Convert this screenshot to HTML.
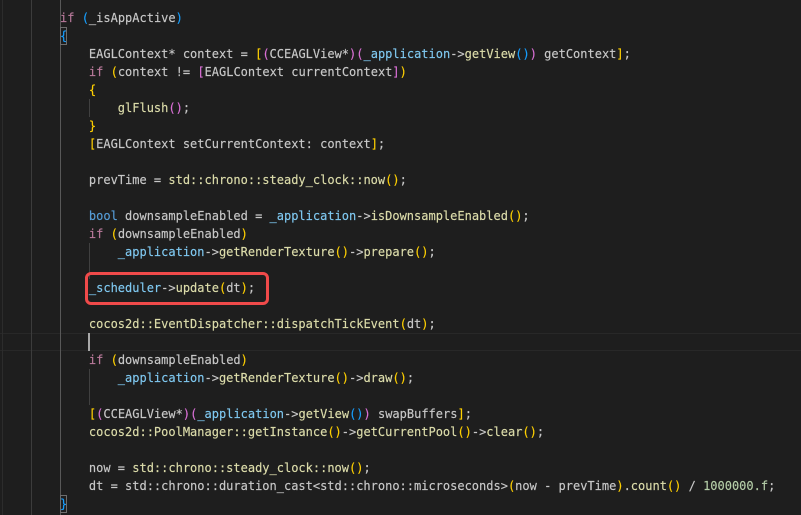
<!DOCTYPE html>
<html>
<head>
<meta charset="utf-8">
<style>
html,body{margin:0;padding:0;background:#1e1e1e;}
#e{position:relative;width:801px;height:515px;overflow:hidden;background:#1e1e1e;font-family:"DejaVu Sans Mono","Liberation Mono",monospace;font-size:12px;line-height:18px;color:#c8c8c8;}
#x{position:absolute;left:0;top:0;width:801px;height:515px;filter:blur(0.3px);-webkit-text-stroke:0.15px currentColor;}
.l{position:absolute;left:60px;white-space:pre;height:18px;}
.g{position:absolute;width:1px;background:#404040;}
.k{color:#c586c0}.c{color:#b8799a}.v{color:#7fc8f0}.f{color:#dcdcaa}.t{color:#569cd6}.n{color:#b5cea8}
.y{color:#ffd000}.p{color:#da70d6}.b{color:#179fff}
</style>
</head>
<body>
<div id="e">
<div style="position:absolute;left:0;top:333px;width:801px;height:18px;border-top:1px solid #282828;border-bottom:1px solid #282828;box-sizing:border-box"></div>
<div class="g" style="left:2px;top:0;height:515px;background:#2c2c2c"></div>
<div class="g" style="left:31px;top:0;height:515px;background:#3c3c3c"></div>
<div class="g" style="left:60px;top:0;height:515px;background:#585858"></div>
<div class="g" style="left:89px;top:99px;height:18px"></div>
<div class="g" style="left:89px;top:243px;height:36px"></div>
<div class="g" style="left:89px;top:369px;height:36px"></div>
<div style="position:absolute;left:60px;top:27px;width:5px;height:16px;border:1px solid #6e6e6e"></div>
<div style="position:absolute;left:60px;top:495px;width:5px;height:16px;border:1px solid #6e6e6e"></div>
<div style="position:absolute;left:88px;top:333px;width:2px;height:18px;background:#a8a8a8"></div>

<div id="x">
<div class="l" style="top:9px"><span class="c">if</span> <span class="b">(</span>_isAppActive<span class="b">)</span></div>
<div class="l" style="top:27px"><span class="b">{</span></div>
<div class="l" style="top:45px">    EAGLContext* context = <span class="y">[</span><span class="p">(</span>CCEAGLView*<span class="p">)</span><span class="p">(</span><span class="v">_application</span>-&gt;<span class="f">getView</span><span class="b">()</span><span class="p">)</span> getContext<span class="y">]</span>;</div>
<div class="l" style="top:63px">    <span class="c">if</span> <span class="y">(</span>context != <span class="p">[</span>EAGLContext currentContext<span class="p">]</span><span class="y">)</span></div>
<div class="l" style="top:81px">    <span class="y">{</span></div>
<div class="l" style="top:99px">        <span class="f">glFlush</span><span class="p">()</span>;</div>
<div class="l" style="top:117px">    <span class="y">}</span></div>
<div class="l" style="top:135px">    <span class="y">[</span>EAGLContext setCurrentContext: context<span class="y">]</span>;</div>
<div class="l" style="top:171px">    prevTime = <span class="f">std::chrono::steady_clock::now</span><span class="y">()</span>;</div>
<div class="l" style="top:207px">    <span class="t">bool</span> downsampleEnabled = <span class="v">_application</span>-&gt;<span class="f">isDownsampleEnabled</span><span class="y">()</span>;</div>
<div class="l" style="top:225px">    <span class="c">if</span> <span class="y">(</span>downsampleEnabled<span class="y">)</span></div>
<div class="l" style="top:243px">        <span class="v">_application</span>-&gt;<span class="f">getRenderTexture</span><span class="y">()</span>-&gt;<span class="f">prepare</span><span class="y">()</span>;</div>
<div class="l" style="top:279px">    <span class="v">_scheduler</span>-&gt;<span class="f">update</span><span class="y">(</span>dt<span class="y">)</span>;</div>
<div class="l" style="top:315px">    <span class="f">cocos2d::EventDispatcher::dispatchTickEvent</span><span class="y">(</span>dt<span class="y">)</span>;</div>
<div class="l" style="top:351px">    <span class="c">if</span> <span class="y">(</span>downsampleEnabled<span class="y">)</span></div>
<div class="l" style="top:369px">        <span class="v">_application</span>-&gt;<span class="f">getRenderTexture</span><span class="y">()</span>-&gt;<span class="f">draw</span><span class="y">()</span>;</div>
<div class="l" style="top:405px">    <span class="y">[</span><span class="p">(</span>CCEAGLView*<span class="p">)</span><span class="p">(</span><span class="v">_application</span>-&gt;<span class="f">getView</span><span class="b">()</span><span class="p">)</span> swapBuffers<span class="y">]</span>;</div>
<div class="l" style="top:423px">    <span class="f">cocos2d::PoolManager::getInstance</span><span class="y">()</span>-&gt;<span class="f">getCurrentPool</span><span class="y">()</span>-&gt;<span class="f">clear</span><span class="y">()</span>;</div>
<div class="l" style="top:459px">    now = <span class="f">std::chrono::steady_clock::now</span><span class="y">()</span>;</div>
<div class="l" style="top:477px">    dt = std::chrono::duration_cast&lt;std::chrono::microseconds&gt;<span class="y">(</span>now - prevTime<span class="y">)</span>.<span class="f">count</span><span class="y">()</span> / <span class="n">1000000.f</span>;</div>
<div class="l" style="top:495px"><span class="b">}</span></div>
</div>

<div style="position:absolute;left:85px;top:272px;width:184px;height:33px;box-sizing:border-box;border:3px solid #f04a4a;border-radius:6px"></div>
</div>
</body>
</html>
